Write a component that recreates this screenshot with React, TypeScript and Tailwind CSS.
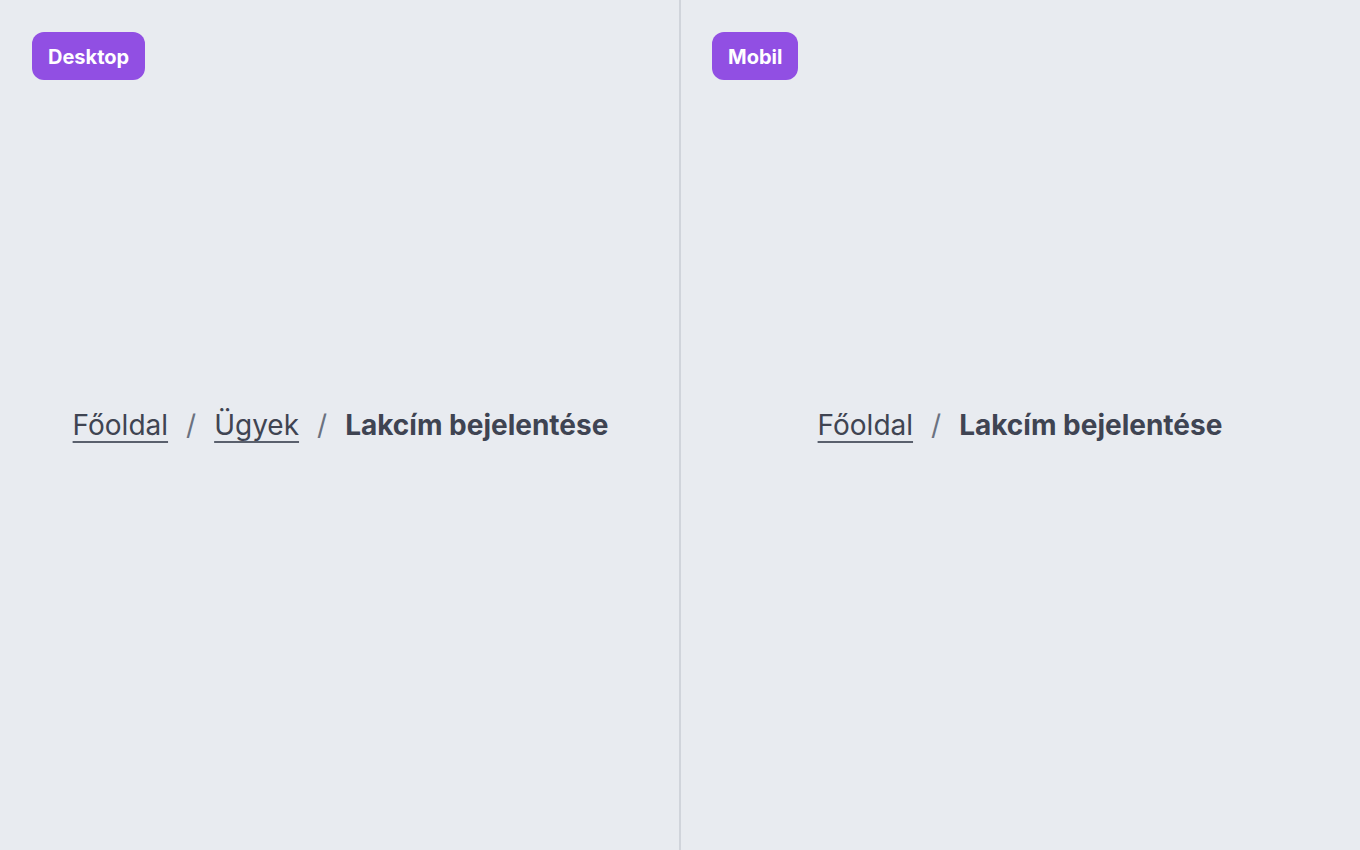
import React from 'react';

const font = { fontFamily: 'Inter, "Noto Sans", sans-serif' };

interface Crumb {
  label: string;
  href?: string;
}

const Breadcrumb: React.FC<{ items: Crumb[] }> = ({ items }) => (
  <nav aria-label="breadcrumb">
    <ol className="flex items-center gap-[18px] text-[28px] leading-none text-[#3f4452]">
      {items.map((item, i) => (
        <React.Fragment key={item.label}>
          {i > 0 && <li className="text-[#6b7280]">/</li>}
          <li>
            {item.href ? (
              <a
                href={item.href}
                className="underline decoration-[2px] underline-offset-[6px] decoration-[#5a606d]"
              >
                {item.label}
              </a>
            ) : (
              <span className="font-bold">{item.label}</span>
            )}
          </li>
        </React.Fragment>
      ))}
    </ol>
  </nav>
);

const Panel: React.FC<{ badge: string; items: Crumb[]; className?: string }> = ({ badge, items, className }) => (
  <section className={`flex flex-col py-8 ${className ?? ''}`}>
    <div>
      <span className="inline-flex items-center h-12 px-4 pt-[2px] rounded-xl bg-[#914fe3] text-white text-[20px] font-bold">
        {badge}
      </span>
    </div>
    <div className="flex-1 flex items-center justify-center pb-[48px]">
      <Breadcrumb items={items} />
    </div>
  </section>
);

export default function App() {
  return (
    <div className="w-[1360px] h-[850px] flex bg-[#e8ebf0]" style={font}>
      <Panel
        className="w-[679px] pl-8 pr-[30px]"
        badge="Desktop"
        items={[{ label: 'Főoldal', href: '#' }, { label: 'Ügyek', href: '#' }, { label: 'Lakcím bejelentése' }]}
      />
      <div className="w-[2px] bg-[#d0d4db]" />
      <Panel
        className="flex-1 pl-[31px] pr-8"
        badge="Mobil"
        items={[{ label: 'Főoldal', href: '#' }, { label: 'Lakcím bejelentése' }]}
      />
    </div>
  );
}
